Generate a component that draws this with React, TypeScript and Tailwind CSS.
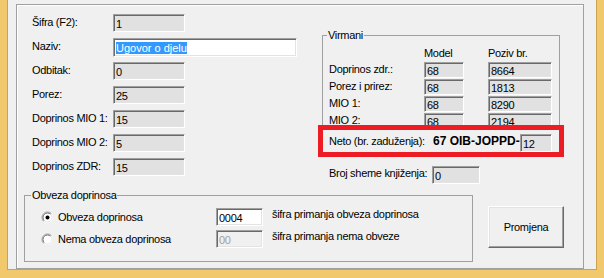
const sunken =
  "border border-t-[#a0a0a0] border-l-[#a0a0a0] border-b-white border-r-white shadow-[inset_1px_1px_0_#696969,inset_-1px_-1px_0_#e3e3e3]";

function Box({ value, w, h = 18, bg = "bg-[#e1e1e1]", muted = false }: { value: string; w: number; h?: number; bg?: string; muted?: boolean }) {
  return (
    <div
      className={`${sunken} ${bg} shrink-0 pl-[2px] text-[11px] leading-[14px] ${h === 16 ? "pt-[1px]" : "pt-[2px]"} ${muted ? "text-[#a0a0a0]" : "text-black"}`}
      style={{ width: w, height: h }}
    >
      {value}
    </div>
  );
}

function Radio({ checked }: { checked?: boolean }) {
  return (
    <svg width="13" height="13" viewBox="0 0 13 13" className="shrink-0">
      <circle cx="6.5" cy="6.5" r="5.5" fill="#fff" />
      <path d="M2.6 10.4 A5.5 5.5 0 0 1 10.4 2.6" stroke="#a0a0a0" fill="none" />
      <path d="M3.3 9.7 A4.5 4.5 0 0 1 9.7 3.3" stroke="#696969" fill="none" />
      <path d="M9.7 3.3 A4.5 4.5 0 0 1 3.3 9.7" stroke="#e3e3e3" fill="none" />
      {checked && <circle cx="6.5" cy="6.5" r="2" fill="#000" />}
    </svg>
  );
}

const leftRows: [string, string][] = [
  ["Odbitak:", "0"],
  ["Porez:", "25"],
  ["Doprinos MIO 1:", "15"],
  ["Doprinos MIO 2:", "5"],
  ["Doprinos ZDR:", "15"],
];

const virmani: [string, string, string][] = [
  ["Doprinos zdr.:", "68", "8664"],
  ["Porez i prirez:", "68", "1813"],
  ["MIO 1:", "68", "8290"],
  ["MIO 2:", "68", "2194"],
];

export default function App() {
  return (
    <div className="relative flex h-[278px] w-[604px] flex-col overflow-hidden bg-[#f1c96c] px-[7px] pb-[8px] font-['Liberation_Sans',Arial,sans-serif] text-[11px] leading-[13px] text-black">
      <div className="flex-1 border-x border-b border-[#c9a352] bg-[#f0f0f0]">
        <div className="ml-[8px] mt-[4px] flex h-[265px] w-[568px] flex-col border border-[#a0a0a0] shadow-[inset_1px_1px_0_#fff]">
          {/* top */}
          <div className="flex h-[183px] pl-[15px] tracking-[-0.3px]">
            <div className="flex w-[290px] flex-col pt-[9px]">
              <div className="flex h-[24px] items-start">
                <span className="w-[81px] pt-[2px]">Šifra (F2):</span>
                <Box value="1" w={72} />
              </div>
              <div className="flex h-[24px] items-start">
                <span className="w-[81px] pt-[2px]">Naziv:</span>
                <div className={`${sunken} h-[19px] w-[184px] bg-white pl-[2px] pt-[2px] text-[11px] leading-[14px] tracking-normal`}>
                  <span className="bg-[#3399ff] text-white">Ugovor o djelu</span>
                </div>
              </div>
              {leftRows.map(([label, value]) => (
                <div key={label} className="flex h-[24px] items-start">
                  <span className="w-[81px] pt-[2px]">{label}</span>
                  <Box value={value} w={72} />
                </div>
              ))}
            </div>

            <div className="flex w-[238px] flex-col pt-[23px]">
              <fieldset className="border border-[#a0a0a0] px-[6px] pb-[1px]">
                <legend className="-ml-[2px] px-[1px] leading-[14px]">Virmani</legend>
                <div className="mt-[3px] flex h-[17px] pt-[2px]">
                  <span className="w-[95px]" />
                  <span className="w-[64px]">Model</span>
                  <span>Poziv br.</span>
                </div>
                <div className="flex flex-col gap-[1px]">
                  {virmani.map(([label, model, poziv]) => (
                    <div key={label} className="flex h-[16px]">
                      <span className="w-[95px] pt-[1px]">{label}</span>
                      <Box value={model} w={40} h={16} />
                      <span className="w-[24px]" />
                      <Box value={poziv} w={64} h={16} />
                    </div>
                  ))}
                </div>
                <div className="mt-[5px] flex h-[18px] items-start">
                  <span className="w-[104px] pt-[1px]">Neto (br. zaduženja):</span>
                  <span className="w-[87px] text-[12px] font-bold leading-[14px] tracking-normal">67 OIB-JOPPD-</span>
                  <Box value="12" w={32} />
                </div>
              </fieldset>
              <div className="mt-[12px] flex h-[18px] items-start pl-[7px]">
                <span className="w-[103px] pt-[1px]">Broj sheme knjiženja:</span>
                <Box value="0" w={48} />
              </div>
            </div>
          </div>

          {/* bottom */}
          <div className="flex pl-[7px] tracking-[-0.3px]">
            <fieldset className="h-[74px] w-[449px] border border-[#a0a0a0]">
              <legend className="ml-[6px] px-[1px] leading-[14px]">Obveza doprinosa</legend>
              <div className="mt-[6px] flex h-[18px] items-start pl-[16px]">
                <div className="flex h-[18px] w-[175px] items-center gap-[4px]">
                  <Radio checked />
                  <span>Obveza doprinosa</span>
                </div>
                <Box value="0004" w={47} bg="bg-white" />
                <span className="ml-[9px]">šifra primanja obveza doprinosa</span>
              </div>
              <div className="mt-[4px] flex h-[18px] items-start pl-[16px]">
                <div className="flex h-[18px] w-[175px] items-center gap-[4px]">
                  <Radio />
                  <span>Nema obveza doprinosa</span>
                </div>
                <Box value="00" w={47} bg="bg-[#f0f0f0]" muted />
                <span className="ml-[9px]">šifra primanja nema obveze</span>
              </div>
            </fieldset>
            <button className="ml-[15px] mt-[18px] h-[42px] w-[76px] border border-t-white border-l-white border-b-[#696969] border-r-[#696969] bg-[#f0f0f0] shadow-[inset_-1px_-1px_0_#a0a0a0,inset_1px_1px_0_#e3e3e3] text-[11px] tracking-[-0.3px]">
              Promjena
            </button>
          </div>
        </div>
      </div>

      <div className="pointer-events-none absolute left-[318px] top-[125px] h-[32px] w-[246px] border-[5px] border-[#ed1c24]" />
    </div>
  );
}
